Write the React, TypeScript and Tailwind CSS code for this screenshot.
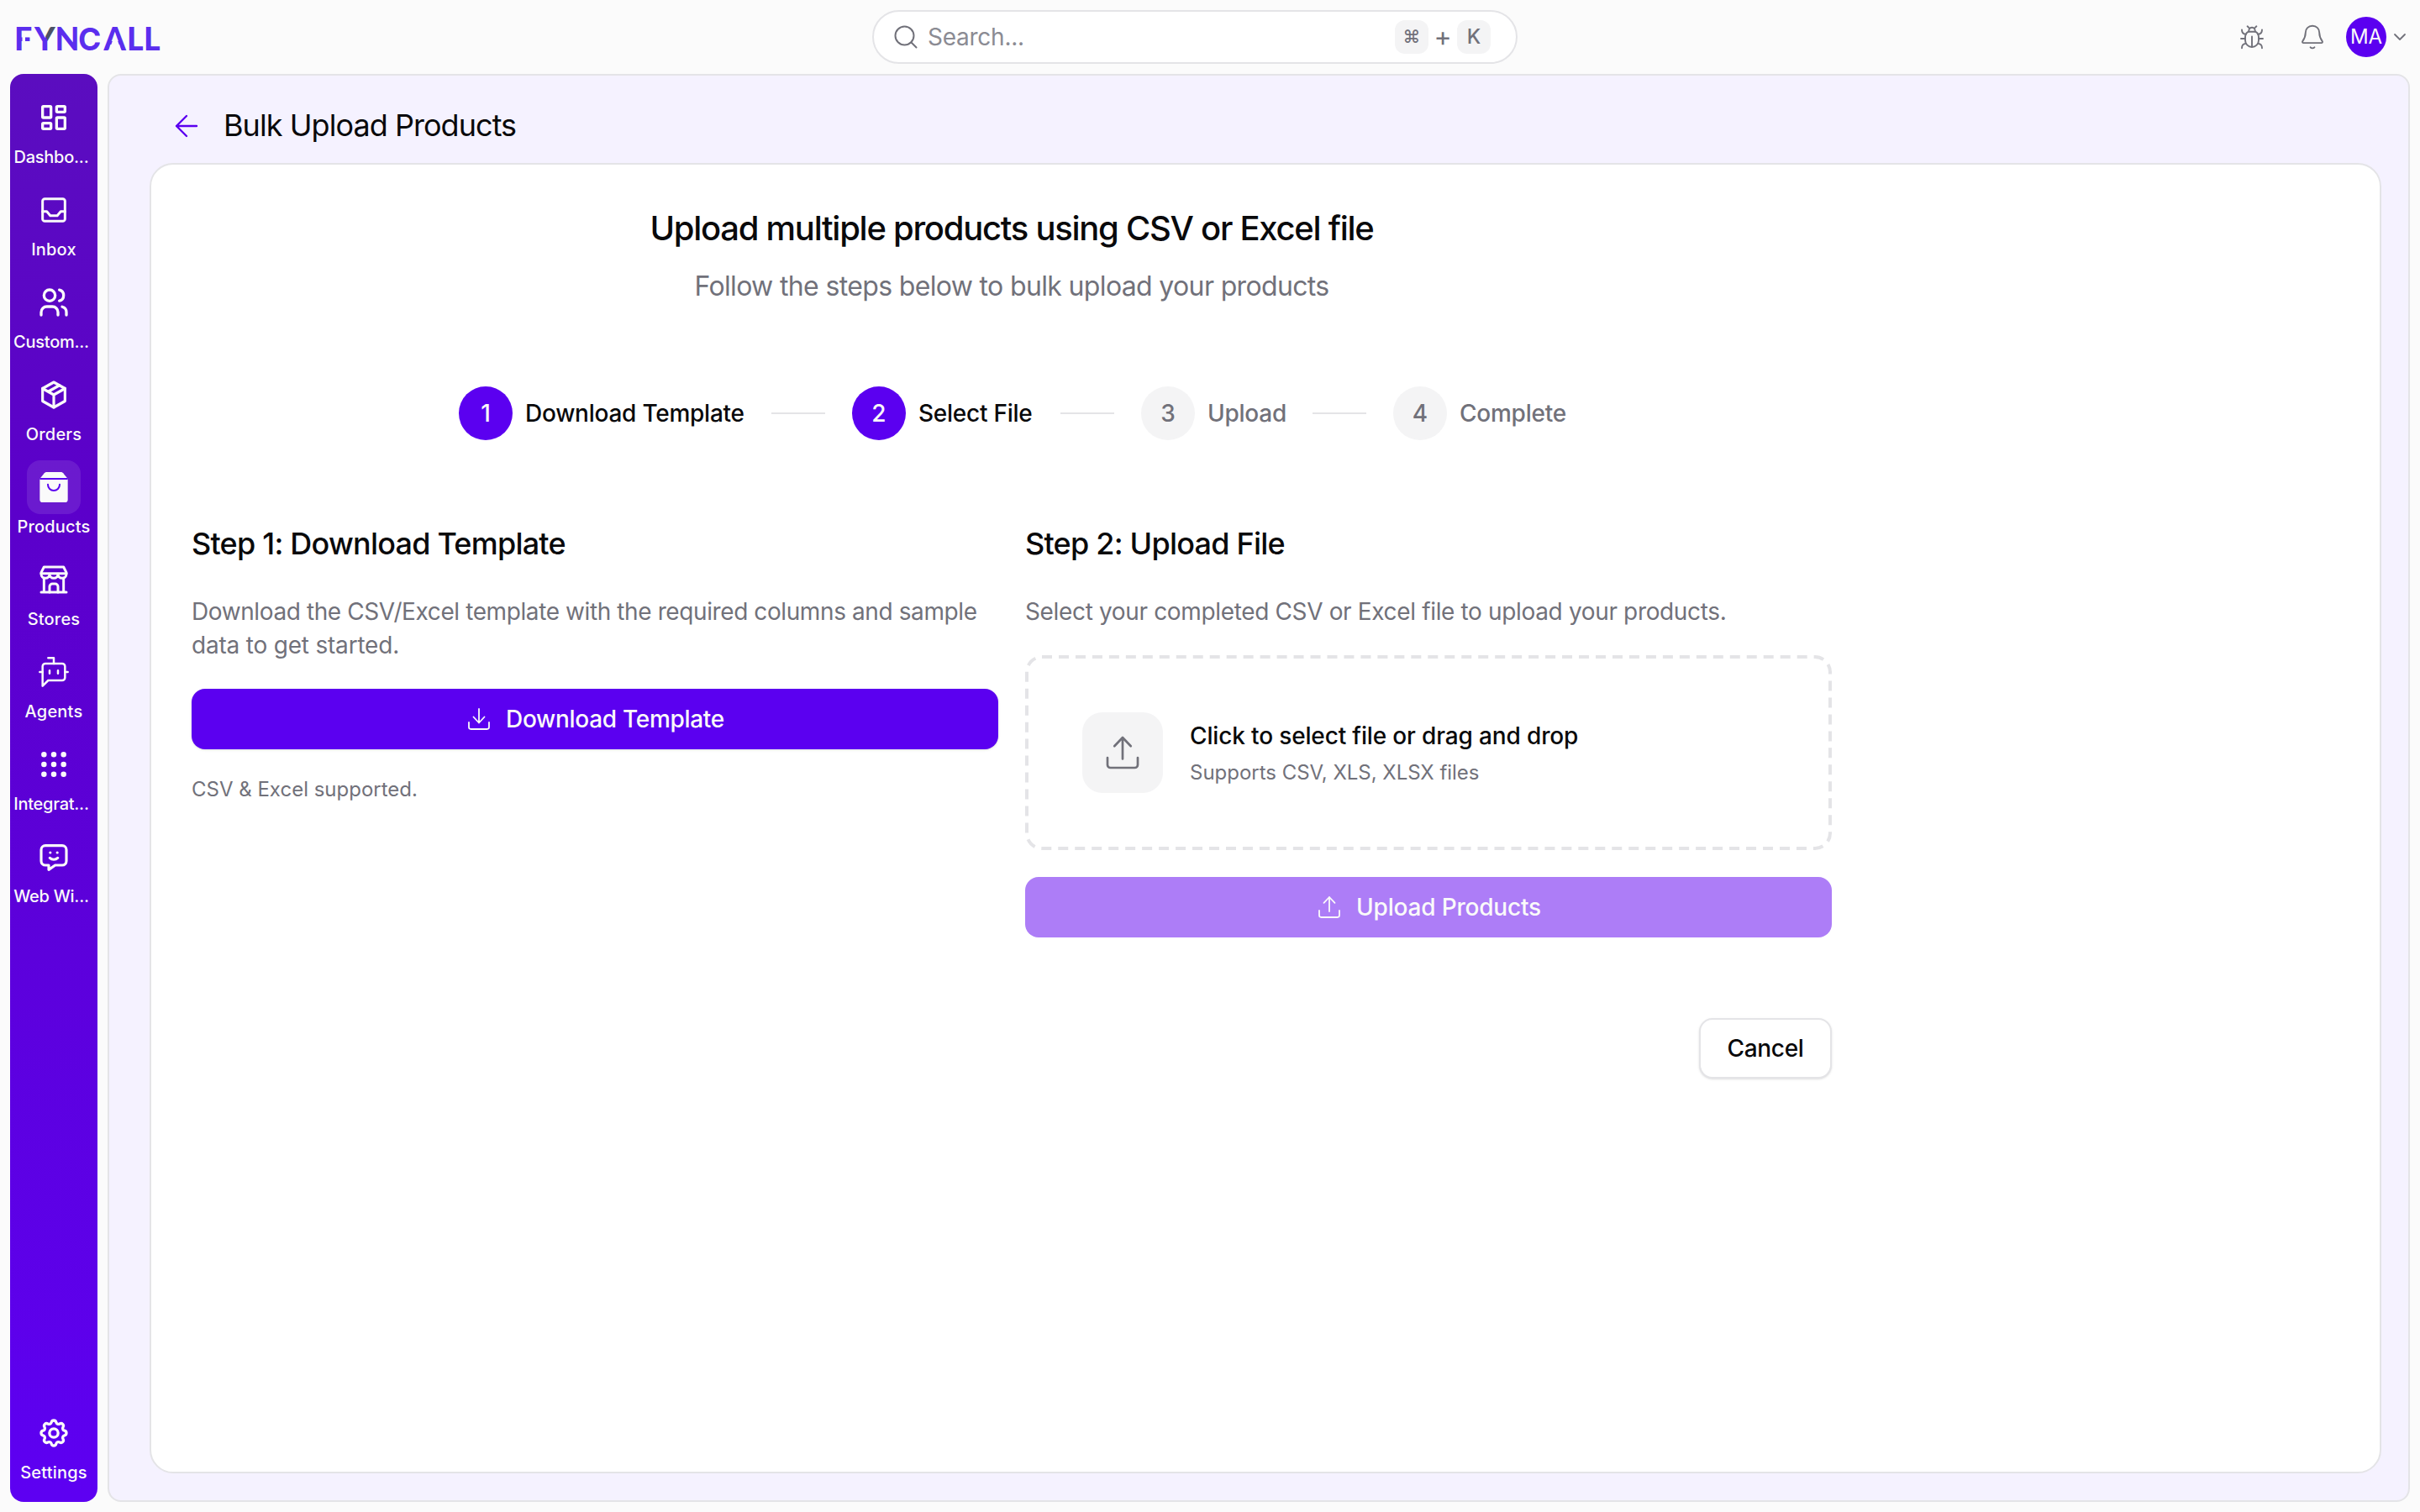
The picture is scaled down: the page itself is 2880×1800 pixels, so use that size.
import type { ReactNode } from "react";

type IconProps = { className?: string; width?: number };

function Svg({
  children,
  className,
  width = 2,
  box = 24,
}: IconProps & { children: ReactNode; box?: number }) {
  return (
    <svg
      viewBox={`0 0 ${box} ${box}`}
      fill="none"
      stroke="currentColor"
      strokeWidth={width}
      strokeLinecap="round"
      strokeLinejoin="round"
      className={className}
    >
      {children}
    </svg>
  );
}

const NAV = [
  {
    label: "Dashbo...",
    icon: (
      <Svg className="size-10">
        <rect x="4" y="4" width="6" height="8" rx="0.6" />
        <rect x="14" y="4" width="6" height="4" rx="0.6" />
        <rect x="4" y="16" width="6" height="4" rx="0.6" />
        <rect x="14" y="12" width="6" height="8" rx="0.6" />
      </Svg>
    ),
  },
  {
    label: "Inbox",
    icon: (
      <Svg className="size-10" width={1.8}>
        <rect x="4" y="4" width="16" height="16" rx="1.6" />
        <path d="M4 13h3l2.5 3h5l2.5-3h3" />
      </Svg>
    ),
  },
  {
    label: "Custom...",
    icon: (
      <Svg className="size-10">
        <circle cx="9" cy="7" r="4" />
        <path d="M3 21v-2a4 4 0 0 1 4-4h4a4 4 0 0 1 4 4v2" />
        <path d="M16 3.13a4 4 0 0 1 0 7.75" />
        <path d="M21 21v-2a4 4 0 0 0-3-3.85" />
      </Svg>
    ),
  },
  {
    label: "Orders",
    icon: (
      <Svg className="size-10" width={1.9}>
        <path d="M12 3l8 4.5v9L12 21l-8-4.5v-9z" />
        <path d="M12 12l8-4.5M12 12v9M12 12L4 7.5M16 5.25l-8 4.5" />
      </Svg>
    ),
  },
  {
    label: "Products",
    active: true,
    icon: (
      <svg viewBox="0 0 24 24" className="size-10" fill="none">
        <path
          fill="#fafafa"
          d="M7 1.2h10c.7 0 1.2.2 1.7.7L22 6v14.8a2 2 0 0 1-2 2H4a2 2 0 0 1-2-2V6l3.3-4.1c.5-.5 1-.7 1.7-.7z"
        />
        <path stroke="#5b00f0" strokeWidth="1.2" d="M2 6h20" />
        <path stroke="#5b00f0" strokeWidth="1.2" strokeLinecap="round" d="M7.8 10v.2a4.2 4.2 0 0 0 8.4 0V10" />
      </svg>
    ),
  },
  {
    label: "Stores",
    icon: (
      <Svg className="size-10" width={1.8}>
        <path d="M5 3h14l2 4v1a3 3 0 0 1-6 0a3 3 0 0 1-6 0a3 3 0 0 1-6 0V7z" />
        <path d="M3 7.6h18M5 11v10M19 11v10M3 21h18" />
        <path d="M9 21v-4a2 2 0 0 1 2-2h2a2 2 0 0 1 2 2v4" />
      </Svg>
    ),
  },
  {
    label: "Agents",
    icon: (
      <Svg className="size-10" width={1.5}>
        <path d="M12 6V2H8" />
        <path d="m8 18-4 4V8a2 2 0 0 1 2-2h12a2 2 0 0 1 2 2v8a2 2 0 0 1-2 2Z" />
        <path d="M2 12h2M9 11v2M15 11v2M20 12h2" />
      </Svg>
    ),
  },
  {
    label: "Integrat...",
    icon: (
      <Svg className="size-10" width={1.9}>
        {[5, 12, 19].map((y) =>
          [5, 12, 19].map((x) => <circle key={`${x}-${y}`} cx={x} cy={y} r="1" />)
        )}
      </Svg>
    ),
  },
  {
    label: "Web Wi...",
    icon: (
      <Svg className="size-10" width={1.9}>
        <path d="M6 4h12a3 3 0 0 1 3 3v8a3 3 0 0 1-3 3h-5L8.4 21.2V18H6a3 3 0 0 1-3-3V7a3 3 0 0 1 3-3z" />
        <path d="M9.5 9h.01M14.5 9h.01M9.2 12.8c1.5 1.5 4.1 1.5 5.6 0" />
      </Svg>
    ),
  },
];

const STEPS = [
  { label: "Download Template", width: "w-[261px]", done: true },
  { label: "Select File", width: "w-[137px]", done: true },
  { label: "Upload", width: "w-[93px]", done: false },
  { label: "Complete", width: "w-[125px]", done: false },
];

function GearIcon() {
  return (
    <Svg className="size-10">
      <path d="M10.325 4.317c.426-1.756 2.924-1.756 3.35 0a1.724 1.724 0 0 0 2.573 1.066c1.543-.94 3.31.826 2.37 2.37a1.724 1.724 0 0 0 1.065 2.572c1.756.426 1.756 2.924 0 3.35a1.724 1.724 0 0 0-1.066 2.573c.94 1.543-.826 3.31-2.37 2.37a1.724 1.724 0 0 0-2.572 1.065c-.426 1.756-2.924 1.756-3.35 0a1.724 1.724 0 0 0-2.573-1.066c-1.543.94-3.31-.826-2.37-2.37a1.724 1.724 0 0 0-1.065-2.572c-1.756-.426-1.756-2.924 0-3.35a1.724 1.724 0 0 0 1.066-2.573c-.94-1.543.826-3.31 2.37-2.37c1 .608 2.296.07 2.572-1.065z" />
      <circle cx="12" cy="12" r="3.1" />
    </Svg>
  );
}

function UploadIcon({ className, width = 1.8 }: IconProps) {
  return (
    <Svg box={32} className={className} width={width}>
      <path d="M16 21V4M9.5 10.8L16 4l6.5 6.8" />
      <path d="M4 20v5.6A2.4 2.4 0 0 0 6.4 28h19.2a2.4 2.4 0 0 0 2.4-2.4V20" />
    </Svg>
  );
}

function DownloadIcon({ className, width = 1.8 }: IconProps) {
  return (
    <Svg box={32} className={className} width={width}>
      <path d="M16 4v16.5M9.5 13.5l6.5 7 6.5-7" />
      <path d="M4 20v5.6A2.4 2.4 0 0 0 6.4 28h19.2a2.4 2.4 0 0 0 2.4-2.4V20" />
    </Svg>
  );
}

function Logo() {
  return (
    <svg viewBox="0 0 200 56" className="h-14 w-[200px]">
      <defs>
        {/* hard stop splits the Y: violet stem, slate right arm */}
        <linearGradient id="arm" gradientUnits="userSpaceOnUse" x1="29.5" y1="34" x2="48.5" y2="24">
          <stop offset="50%" stopColor="#5b2eee" />
          <stop offset="50%" stopColor="#4b5266" />
        </linearGradient>
      </defs>
      <text
        x="1 25 49.5 77 107.5 135 155"
        y="44.3"
        fill="#5b2eee"
        fontFamily="Lato, sans-serif"
        fontWeight="900"
        fontSize="37.5"
      >
        F<tspan fill="url(#arm)">Y</tspan>N
        <tspan fontFamily="Inter, sans-serif" fontWeight="700" fontSize="37">C</tspan>ALL
      </text>
      <g fill="#fbfbfb">
        <rect x="10.5" y="24" width="3.5" height="14" />
        <path d="M121 24l7.5 21h-15z" />
      </g>
    </svg>
  );
}

function NavItem({ icon, label, active }: { icon: ReactNode; label: string; active?: boolean }) {
  return (
    <a className="flex flex-col items-center text-[#fafafa]">
      <span
        className={`flex size-16 items-center justify-center rounded-2xl ${active ? "bg-white/10" : ""}`}
      >
        {icon}
      </span>
      <span
        className={`whitespace-nowrap text-[20px] leading-[30px] font-medium ${
          label.endsWith("...") ? "mr-1.5 tracking-[-0.25px]" : "tracking-[0.2px]"
        }`}
      >
        {label}
      </span>
    </a>
  );
}

function Header() {
  return (
    <header className="flex h-[88px] items-center justify-between pl-4 pr-4">
      <div className="w-[1022px]">
        <Logo />
      </div>
      <div className="flex h-16 w-[768px] items-center rounded-full border-2 border-[#e4e4e7] bg-white pl-[22px] pr-[30px] text-[#71717a]">
        <Svg box={32} className="size-8" width={2}>
          <circle cx="14.5" cy="14.5" r="11" />
          <path d="M22.5 22.5l6 6" />
        </Svg>
        <span className="ml-2.5 flex-1 text-[28px] tracking-[-0.25px] text-[#8b8b93]">Search...</span>
        <div className="flex items-center gap-2 text-[24px] font-medium">
          <kbd className="flex size-10 items-center justify-center rounded-xl bg-[#f4f4f5] font-[Inter,'DejaVu_Sans',sans-serif] text-[21px]">
            ⌘
          </kbd>
          <span className="flex w-[18px] justify-center text-[32px] leading-10 font-normal">+</span>
          <kbd className="flex size-10 items-center justify-center rounded-xl bg-[#f4f4f5] font-[Inter,sans-serif]">K</kbd>
        </div>
      </div>
      <div className="flex w-[1058px] items-center justify-end text-[#71717a]">
        <Svg box={32} className="size-8" width={1.9}>
          <path d="M11.5 9.8h9c2.2 1.2 3.5 3.6 3.5 6.6v3.6a8 8 0 0 1-16 0v-3.6c0-3 1.3-5.4 3.5-6.6z" />
          <path d="M12.3 9.6V8.5a3.7 3.7 0 0 1 7.4 0v1.1" />
          <path d="M13 5.6l-2.4-2.3M19 5.6l2.4-2.3M16 15.5V27.5M3 18h5M24 18h5" />
          <path d="M4 7.5c0 3.2 1.6 5 4.8 5.3M28 7.5c0 3.2-1.6 5-4.8 5.3M4 29.2c0-3.2 1.6-5 4.8-5.3M28 29.2c0-3.2-1.6-5-4.8-5.3" />
        </Svg>
        <Svg box={32} className="ml-10 size-8" width={1.9}>
          <path d="M16 2.8c-5 0-8.2 3.4-8.2 7.9 0 5-1.4 7.4-3.5 10.4-.7 1 0 2 1 2h21.4c1 0 1.7-1 1-2-2.1-3-3.5-5.4-3.5-10.4 0-4.5-3.2-7.9-8.2-7.9z" />
          <path d="M13.6 28.3a3.2 3.2 0 0 0 4.8 0" />
        </Svg>
        <span className="ml-6 flex size-12 items-center justify-center rounded-full bg-[#5b00f0] text-[24px] text-[#fafafa]">
          MA
        </span>
        <Svg box={16} className="ml-2 size-4" width={1.8}>
          <path d="M2 5l6 6 6-6" />
        </Svg>
      </div>
    </header>
  );
}

function Stepper() {
  return (
    <div className="mt-[95px] flex items-center justify-center text-[28px] font-medium">
      {STEPS.map((step, i) => (
        <div key={step.label} className="flex items-center">
          <span
            className={`flex size-16 items-center justify-center rounded-full ${
              step.done ? "bg-[#5b00f0] text-[#fafafa]" : "bg-[#f4f4f5] text-[#71717a]"
            }`}
          >
            {i + 1}
          </span>
          <span
            className={`ml-[15px] whitespace-nowrap tracking-[-0.25px] ${step.width} ${
              step.done ? "text-[#09090b]" : "text-[#71717a]"
            }`}
          >
            {step.label}
          </span>
          {i < STEPS.length - 1 && <span className="mx-8 h-0.5 w-16 bg-[#e4e4e7]" />}
        </div>
      ))}
    </div>
  );
}

function DropZone() {
  return (
    <div className="relative mt-8 flex h-[232px] items-center gap-8 px-[68px]">
      <svg className="absolute inset-0 size-full" fill="none">
        <rect
          x="2"
          y="2"
          width="956"
          height="228"
          rx="18"
          stroke="#e4e4e7"
          strokeWidth="4"
          strokeDasharray="12 7.97"
        />
      </svg>
      <span className="flex size-24 items-center justify-center rounded-3xl bg-[#f4f4f5] text-[#71717a]">
        <UploadIcon className="size-12" />
      </span>
      <div className="pt-1">
        <p className="text-[28px] leading-10 font-medium tracking-[-0.15px]">
          Click to select file or drag and drop
        </p>
        <p className="mt-1 text-[24px] leading-10 tracking-[-0.02px] text-[#71717a]">
          Supports CSV, XLS, XLSX files
        </p>
      </div>
    </div>
  );
}

export default function App() {
  return (
    <div className="flex h-[1800px] w-[2880px] flex-col overflow-hidden bg-[#fbfbfb] font-[Inter,sans-serif] text-[#09090b]">
      <Header />
      <div className="flex flex-1 gap-3 px-3 pb-3">
        <aside className="flex w-[104px] flex-col justify-between rounded-2xl bg-linear-to-b from-[#5b0dbf] via-[#5b00ca] via-30% to-[#5d00f2] py-5">
          <nav className="flex flex-col gap-4">
            {NAV.map((item) => (
              <NavItem key={item.label} {...item} />
            ))}
          </nav>
          <NavItem icon={<GearIcon />} label="Settings" />
        </aside>

        <main className="flex flex-1 flex-col rounded-2xl border-2 border-[#e4e4e7] bg-[#f5f2ff] pr-8 pb-8 pl-12">
          <div className="flex h-[104px] items-center pt-4 pl-7">
            <Svg box={32} className="size-8 text-[#5b00f0]" width={2.4}>
              <path d="M28 16H4M16 4L4 16l12 12" />
            </Svg>
            <h1 className="-mt-0.5 ml-7 text-[36px] tracking-[-0.95px]">Bulk Upload Products</h1>
          </div>

          <section className="flex-1 rounded-[28px] border-2 border-[#e4e4e7] bg-white px-12 pt-12">
            <div className="w-[1952px]">
              <div className="text-center">
                <h2 className="text-[40px] leading-[56px] font-medium tracking-[-1.28px]">
                  Upload multiple products using CSV or Excel file
                </h2>
                <p className="mt-[17px] text-[32px] leading-[48px] tracking-[-0.65px] text-[#71717a]">
                  Follow the steps below to bulk upload your products
                </p>
              </div>

              <Stepper />

              <div className="mt-[99px] grid grid-cols-2 gap-8">
                <div className="flex flex-col">
                  <h3 className="text-[36px] leading-[48px] font-medium tracking-[-0.78px]">
                    Step 1: Download Template
                  </h3>
                  <p className="mt-[37px] text-[28px] leading-10 tracking-[-0.4px] text-[#71717a]">
                    Download the CSV/Excel template with the required columns and sample
                    <br />
                    <span className="tracking-[-0.2px]">data to get started.</span>
                  </p>
                  <button className="mt-8 flex h-[72px] items-center justify-center gap-4 rounded-2xl bg-[#5b00f0] text-[28px] font-medium tracking-[-0.3px] text-[#fafafa] shadow-sm">
                    <DownloadIcon className="size-8" />
                    Download Template
                  </button>
                  <p className="mt-8 text-[24px] leading-8 text-[#71717a]">CSV &amp; Excel supported.</p>
                </div>

                <div className="flex flex-col">
                  <h3 className="text-[36px] leading-[48px] font-medium tracking-[-0.78px]">
                    Step 2: Upload File
                  </h3>
                  <p className="mt-[37px] text-[28px] leading-10 tracking-[-0.35px] text-[#71717a]">
                    Select your completed CSV or Excel file to upload your products.
                  </p>
                  <DropZone />
                  <button className="mt-8 flex h-[72px] items-center justify-center gap-4 rounded-2xl bg-[#ad7df7] text-[28px] font-medium tracking-[-0.2px] text-[#fafafa]">
                    <UploadIcon className="size-8" />
                    Upload Products
                  </button>
                </div>
              </div>

              <div className="mt-24 flex justify-end">
                <button className="h-[72px] w-[158px] rounded-2xl border-2 border-[#e4e4e7] bg-white text-[28px] font-medium tracking-[-0.3px] shadow-sm">
                  Cancel
                </button>
              </div>
            </div>
          </section>
        </main>
      </div>
    </div>
  );
}
